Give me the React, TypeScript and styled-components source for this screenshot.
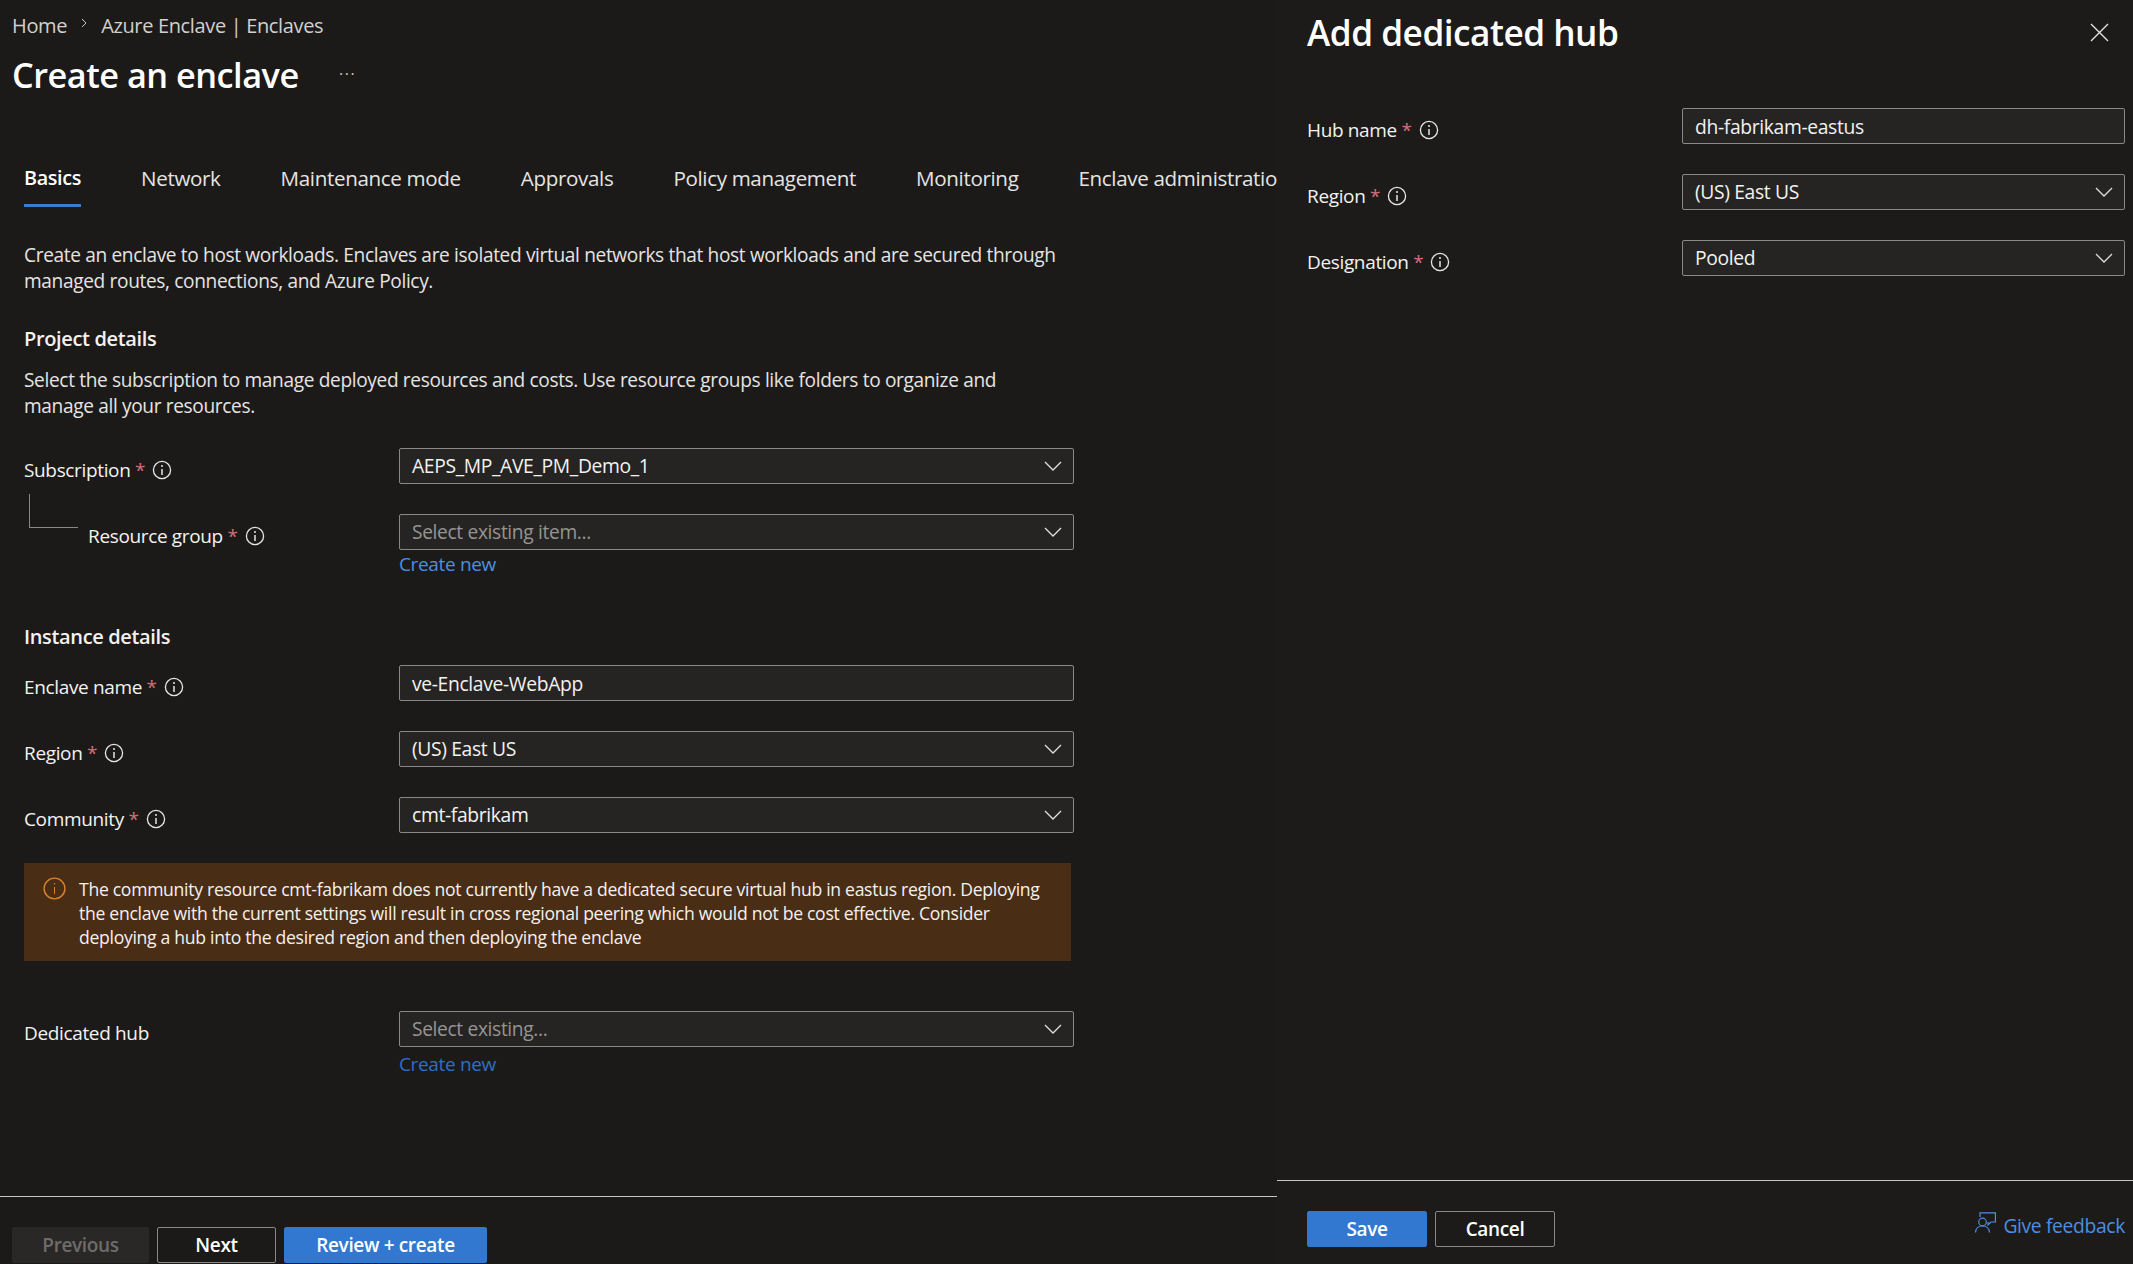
import * as React from "react";
import styled, { createGlobalStyle } from "styled-components";

const GlobalStyle = createGlobalStyle`
  html, body {
    margin: 0;
    padding: 0;
    background: #1b1a19;
  }
  body {
    font-family: "Open Sans", "Noto Sans", "Liberation Sans", sans-serif;
    color: #f3f2f1;
    font-size: 19px;
    letter-spacing: -0.35px;
  }
  * {
    box-sizing: border-box;
  }
`;

const Page = styled.div`
  display: flex;
  width: 2133px;
  height: 1264px;
  overflow: hidden;
`;

const Blade = styled.section`
  width: 1277px;
  flex: none;
  height: 100%;
  display: flex;
  flex-direction: column;
  overflow: hidden;
`;

const Panel = styled.aside`
  flex: 1;
  height: 100%;
  display: flex;
  flex-direction: column;
  background: #1c1b1a;
`;

const Breadcrumb = styled.nav`
  height: 50px;
  padding-left: 12px;
  display: flex;
  align-items: center;
  gap: 13px;
  font-size: 20px;
  color: #d2d0ce;
`;

const CrumbChevron = styled.svg`
  width: 8px;
  height: 10px;
  margin-top: -4px;
`;

const TitleRow = styled.div`
  height: 50px;
  padding: 0 0 2px 12px;
  display: flex;
  align-items: center;
`;

const PageTitle = styled.h1`
  margin: 0;
  font-size: 34.3px;
  font-weight: 600;
  letter-spacing: -0.5px;
  color: #fff;
  width: 327px;
`;

const MoreDots = styled.span`
  font-size: 16px;
  letter-spacing: 1.5px;
  color: #c8c6c4;
`;

const Tabs = styled.div`
  display: flex;
  gap: 60px;
  margin-top: 60px;
  padding-left: 24px;
  white-space: nowrap;
  font-size: 20.6px;
`;

const Tab = styled.div<{ $active?: boolean }>`
  line-height: 36px;
  padding-bottom: 8px;
  border-bottom: 3px solid ${(p) => (p.$active ? "#3a7bd0" : "transparent")};
  font-size: ${(p) => (p.$active ? "19.8px" : "inherit")};
  font-weight: ${(p) => (p.$active ? 600 : 400)};
  color: ${(p) => (p.$active ? "#fff" : "#e6e4e2")};
`;

const Body = styled.div`
  flex: 1;
  padding-left: 24px;
`;

const Paragraph = styled.p<{ $top: number; $width: number }>`
  margin: ${(p) => p.$top}px 0 0;
  width: ${(p) => p.$width}px;
  font-size: 19.1px;
  line-height: 26px;
  color: #e6e4e2;
`;

const SectionTitle = styled.h2<{ $top: number }>`
  margin: ${(p) => p.$top}px 0 0;
  font-size: 20px;
  line-height: 26px;
  font-weight: 600;
  color: #f3f2f1;
`;

const Row = styled.div<{ $top: number; $field: number }>`
  position: relative;
  display: grid;
  grid-template-columns: 375px ${(p) => p.$field}px;
  margin-top: ${(p) => p.$top}px;
`;

const LabelCell = styled.div<{ $indent?: boolean }>`
  display: flex;
  align-items: center;
  gap: 7px;
  height: 36px;
  padding-top: 8px;
  padding-left: ${(p) => (p.$indent ? "64px" : "0")};
  color: #f3f2f1;
  white-space: nowrap;
`;

const Star = styled.span`
  color: #d0707a;
`;

const Connector = styled.div`
  position: absolute;
  left: 5px;
  top: -20px;
  width: 49px;
  height: 34px;
  border-left: 1px solid #8a8886;
  border-bottom: 1px solid #8a8886;
`;

const Field = styled.div<{ $placeholder?: boolean; $plain?: boolean }>`
  height: 36px;
  padding: 0 11px ${(p) => (p.$plain ? "0" : "2px")} 12px;
  display: flex;
  align-items: center;
  justify-content: space-between;
  background: #252423;
  border: 1px solid #8a8886;
  border-radius: 2px;
  font-size: ${(p) => (p.$placeholder ? "19.2px" : "19.3px")};
  color: ${(p) => (p.$placeholder ? "#969492" : "#f3f2f1")};
`;

const Chevron = styled.svg`
  width: 18px;
  height: 10px;
  margin-top: 2px;
`;

const CreateLink = styled.a<{ $dim?: boolean }>`
  display: block;
  grid-column: 2;
  margin-top: ${(p) => (p.$dim ? "4px" : "1px")};
  margin-bottom: ${(p) => (p.$dim ? "0" : "1px")};
  line-height: 26px;
  color: ${(p) => (p.$dim ? "#2f6fc4" : "#4a90e2")};
`;

const Warning = styled.div`
  margin-top: 30px;
  width: 1047px;
  height: 98px;
  padding: 14px 16px 0 19px;
  display: flex;
  gap: 13px;
  background: #4a2d15;
`;

const WarningIcon = styled.svg`
  width: 23px;
  height: 23px;
  flex: none;
`;

const WarningText = styled.div`
  font-size: 17.6px;
  line-height: 24px;
  color: #f3f2f1;
  letter-spacing: -0.3px;
`;

const Footer = styled.footer<{ $height: number; $left: number }>`
  height: ${(p) => p.$height}px;
  flex: none;
  border-top: 1px solid #c8c6c4;
  padding: 30px 8px 0 ${(p) => p.$left}px;
  display: flex;
  gap: 8px;
`;

const Button = styled.button<{ $kind: "primary" | "outline" | "disabled"; $width: number }>`
  width: ${(p) => p.$width}px;
  height: 36px;
  font: inherit;
  letter-spacing: inherit;
  font-weight: 600;
  padding: 0;
  border-radius: 2px;
  border: 1px solid
    ${(p) =>
      p.$kind === "primary" ? "#3277d0" : p.$kind === "outline" ? "#8a8886" : "#292827"};
  background: ${(p) =>
    p.$kind === "primary" ? "#3277d0" : p.$kind === "outline" ? "transparent" : "#292827"};
  color: ${(p) => (p.$kind === "disabled" ? "#6e6c6a" : "#fff")};
`;

const PanelHeader = styled.header`
  height: 64px;
  padding: 0 24px 0 30px;
  display: flex;
  align-items: center;
  justify-content: space-between;
`;

const PanelTitle = styled.h2`
  margin: 0;
  font-size: 35.2px;
  font-weight: 600;
  letter-spacing: -0.5px;
  color: #fff;
`;

const CloseIcon = styled.svg`
  width: 19px;
  height: 19px;
`;

const PanelBody = styled.div`
  flex: 1;
  padding-left: 30px;
  padding-top: 44px;
`;

const Feedback = styled.a`
  margin-left: auto;
  display: flex;
  align-items: center;
  gap: 7px;
  height: 28px;
  font-size: 19.3px;
  color: #4a90e2;
`;

const FeedbackIcon = styled.svg`
  width: 21px;
  height: 21px;
  margin-top: -6px;
`;

const InfoSvg = styled.svg`
  width: 20px;
  height: 20px;
  flex: none;
`;

const Info = () => (
  <InfoSvg viewBox="0 0 20 20" fill="none" stroke="#e8e6e4">
    <circle cx="10" cy="10" r="8.6" strokeWidth="1.3" />
    <path d="M10 9v6" strokeWidth="1.5" />
    <circle cx="10" cy="6" r="1" fill="#e8e6e4" stroke="none" />
  </InfoSvg>
);

const Caret = () => (
  <Chevron viewBox="0 0 18 10" fill="none" stroke="#e1dfdd" strokeWidth="1.3">
    <path d="M1 1l8 8 8-8" />
  </Chevron>
);

const FormLabel = ({ text, required = true, indent }: { text: string; required?: boolean; indent?: boolean }) => (
  <LabelCell $indent={indent}>
    <span>
      {text}
      {required && <Star> *</Star>}
    </span>
    {required && <Info />}
  </LabelCell>
);

const tabs = [
  "Basics",
  "Network",
  "Maintenance mode",
  "Approvals",
  "Policy management",
  "Monitoring",
  "Enclave administration",
];

export default function App() {
  return (
    <Page>
      <GlobalStyle />
      <Blade>
        <Breadcrumb>
          <span>Home</span>
          <CrumbChevron viewBox="0 0 8 10" fill="none" stroke="#c8c6c4">
            <path d="M2 1l4 4-4 4" />
          </CrumbChevron>
          <span>Azure Enclave | Enclaves</span>
        </Breadcrumb>
        <TitleRow>
          <PageTitle>Create an enclave</PageTitle>
          <MoreDots>···</MoreDots>
        </TitleRow>
        <Tabs>
          {tabs.map((t, i) => (
            <Tab key={t} $active={i === 0}>
              {t}
            </Tab>
          ))}
        </Tabs>
        <Body>
          <Paragraph $top={35} $width={1045}>
            Create an enclave to host workloads. Enclaves are isolated virtual networks that host workloads and are
            secured through managed routes, connections, and Azure Policy.
          </Paragraph>
          <SectionTitle $top={32}>Project details</SectionTitle>
          <Paragraph $top={15} $width={1010}>
            Select the subscription to manage deployed resources and costs. Use resource groups like folders to
            organize and manage all your resources.
          </Paragraph>
          <Row $top={29} $field={675}>
            <FormLabel text="Subscription" />
            <Field>
              AEPS_MP_AVE_PM_Demo_1
              <Caret />
            </Field>
          </Row>
          <Row $top={30} $field={675}>
            <Connector />
            <FormLabel text="Resource group" indent />
            <Field $placeholder>
              Select existing item...
              <Caret />
            </Field>
            <CreateLink>Create new</CreateLink>
          </Row>
          <SectionTitle $top={46}>Instance details</SectionTitle>
          <Row $top={15} $field={675}>
            <FormLabel text="Enclave name" />
            <Field $plain>ve-Enclave-WebApp</Field>
          </Row>
          <Row $top={30} $field={675}>
            <FormLabel text="Region" />
            <Field>
              (US) East US
              <Caret />
            </Field>
          </Row>
          <Row $top={30} $field={675}>
            <FormLabel text="Community" />
            <Field>
              cmt-fabrikam
              <Caret />
            </Field>
          </Row>
          <Warning>
            <WarningIcon viewBox="0 0 23 23" fill="none" stroke="#d9822b">
              <circle cx="11.5" cy="11.5" r="10.4" strokeWidth="1.4" />
              <path d="M11.5 10v7" strokeWidth="1" />
              <circle cx="11.5" cy="6.8" r="0.8" fill="#d9822b" stroke="none" />
            </WarningIcon>
            <WarningText>
              The community resource cmt-fabrikam does not currently have a dedicated secure virtual hub in eastus
              region. Deploying the enclave with the current settings will result in cross regional peering which would
              not be cost effective. Consider deploying a hub into the desired region and then deploying the enclave
            </WarningText>
          </Warning>
          <Row $top={50} $field={675}>
            <FormLabel text="Dedicated hub" required={false} />
            <Field $placeholder>
              Select existing...
              <Caret />
            </Field>
            <CreateLink $dim>Create new</CreateLink>
          </Row>
        </Body>
        <Footer $height={68} $left={12}>
          <Button $kind="disabled" $width={137}>
            Previous
          </Button>
          <Button $kind="outline" $width={119}>
            Next
          </Button>
          <Button $kind="primary" $width={203}>
            Review + create
          </Button>
        </Footer>
      </Blade>
      <Panel>
        <PanelHeader>
          <PanelTitle>Add dedicated hub</PanelTitle>
          <CloseIcon viewBox="0 0 19 19" fill="none" stroke="#e8e6e4" strokeWidth="1.3">
            <path d="M1 1l17 17M18 1L1 18" />
          </CloseIcon>
        </PanelHeader>
        <PanelBody>
          <Row $top={0} $field={443}>
            <FormLabel text="Hub name" />
            <Field $plain>dh-fabrikam-eastus</Field>
          </Row>
          <Row $top={30} $field={443}>
            <FormLabel text="Region" />
            <Field>
              (US) East US
              <Caret />
            </Field>
          </Row>
          <Row $top={30} $field={443}>
            <FormLabel text="Designation" />
            <Field>
              Pooled
              <Caret />
            </Field>
          </Row>
        </PanelBody>
        <Footer $height={84} $left={30}>
          <Button $kind="primary" $width={120}>
            Save
          </Button>
          <Button $kind="outline" $width={120}>
            Cancel
          </Button>
          <Feedback>
            <FeedbackIcon viewBox="0 0 21 21" fill="none" stroke="#4a90e2" strokeWidth="1.2">
              <circle cx="7.5" cy="10" r="3.8" />
              <path d="M.6 20.5c0-4 3-6.5 6.9-6.5s6.900 2.500 6.900 6.500" />
              <path d="M5 5V.8h15.400V10h-4.400L13 12.800V10" />
            </FeedbackIcon>
            Give feedback
          </Feedback>
        </Footer>
      </Panel>
    </Page>
  );
}
